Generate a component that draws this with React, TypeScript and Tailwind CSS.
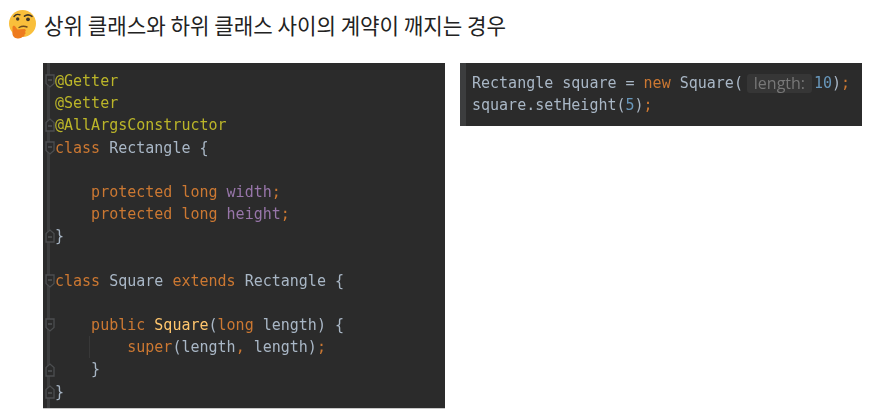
type Tok = [string, string];
type Fold = "start" | "end" | null;

const TXT = "text-[#a9b7c6]";
const KW = "text-[#cc7832]";
const ANN = "text-[#bbb529]";
const FIELD = "text-[#9876aa]";
const FN = "text-[#ffc66d]";
const NUM = "text-[#6897bb]";

const lines: { fold: Fold; toks: Tok[] }[] = [
  { fold: "start", toks: [["@Getter", ANN]] },
  { fold: null, toks: [["@Setter", ANN]] },
  { fold: "end", toks: [["@AllArgsConstructor", ANN]] },
  { fold: "start", toks: [["class ", KW], ["Rectangle {", TXT]] },
  { fold: null, toks: [] },
  { fold: null, toks: [["    protected long ", KW], ["width", FIELD], [";", KW]] },
  { fold: null, toks: [["    protected long ", KW], ["height", FIELD], [";", KW]] },
  { fold: "end", toks: [["}", TXT]] },
  { fold: null, toks: [] },
  { fold: "start", toks: [["class ", KW], ["Square ", TXT], ["extends ", KW], ["Rectangle {", TXT]] },
  { fold: null, toks: [] },
  { fold: "start", toks: [["    public ", KW], ["Square", FN], ["(", TXT], ["long ", KW], ["length) {", TXT]] },
  { fold: null, toks: [["        super", KW], ["(length", TXT], [", ", KW], ["length)", TXT], [";", KW]] },
  { fold: "end", toks: [["    }", TXT]] },
  { fold: "end", toks: [["}", TXT]] },
];

function FoldMark({ type }: { type: Fold }) {
  if (!type) return null;
  const d = type === "start" ? "M1 1H9V9.5L5 13L1 9.5Z" : "M1 13H9V4.5L5 1L1 4.5Z";
  return (
    <svg width="10" height="14" viewBox="0 0 10 14" fill="none" className="block shrink-0">
      <path d={d} fill="#2b2b2b" stroke="#4c4e50" strokeWidth="1.3" />
      <path d={type === "start" ? "M3 6H7" : "M3 8H7"} stroke="#5c5f62" strokeWidth="1.2" />
    </svg>
  );
}

function ThinkingFace() {
  return (
    <svg width="28" height="29" viewBox="0 0 28 29" className="shrink-0">
      <circle cx="14.5" cy="13.5" r="13.5" fill="#f9bf3b" />
      <path d="M6 6.5C7.5 4.5 10 4 12 4.8" fill="none" stroke="#3f3527" strokeWidth="1.4" strokeLinecap="round" />
      <path d="M16.5 6.2C18.5 4.6 21.5 4.6 24 6.4" fill="none" stroke="#3f3527" strokeWidth="1.6" strokeLinecap="round" />
      <circle cx="9.7" cy="9" r="1.7" fill="#3f3527" />
      <circle cx="20" cy="9.3" r="1.9" fill="#3f3527" />
      <path d="M11 17.5C13.5 16.2 16.5 16 19 17" fill="none" stroke="#6b4b1f" strokeWidth="1.4" strokeLinecap="round" />
      <path
        d="M4.5 17C5 15 7 15.5 8 17.5L9.5 19.5L16 19C18 19 18.5 21.2 16.8 21.8C18 22.5 17.8 24.2 16.5 24.5C16.8 25.8 15.8 26.8 14.5 26.8C13.5 28.3 11 28.8 8.5 28.3C5.5 27.6 4 25 4.5 21.5Z"
        fill="#ee7b1e"
      />
    </svg>
  );
}

export default function App() {
  return (
    <div className="w-[891px] h-[414px] bg-white overflow-hidden font-['Noto_Sans_CJK_KR',sans-serif]">
      <div className="flex items-start gap-[8px] pl-[8px] pt-[10px] h-[63px]">
        <ThinkingFace />
        <h1 className="text-[21.2px] leading-[30px] text-[#222] font-normal">
          상위 클래스와 하위 클래스 사이의 계약이 깨지는 경우
        </h1>
      </div>

      <div className="flex items-start gap-[15px] pl-[43px] font-['DejaVu_Sans_Mono',monospace] text-[15px] leading-[22.2px] blur-[0.35px]">
        <div className="w-[402px] h-[346px] bg-[#2b2b2b] border-b border-[#c8c8c8] flex">
          <div className="w-[7px] h-full border-r-[3px] border-[#3c3d3e] pt-[7px] shrink-0">
            {lines.map((l, i) => (
              <div key={i} className="h-[22.2px] flex items-center pl-[2px]">
                <FoldMark type={l.fold} />
              </div>
            ))}
          </div>
          <div className="pl-[5px] pt-[7px] whitespace-pre">
            {lines.map((l, i) => (
              <div key={i} className="relative h-[22.2px]">
                {i === 12 && <span className="absolute left-[34px] top-0 w-px h-full bg-[#383838]" />}
                {l.toks.map(([t, c], j) => (
                  <span key={j} className={c}>
                    {t}
                  </span>
                ))}
              </div>
            ))}
          </div>
        </div>

        <div className="w-[402px] h-[63px] bg-[#2b2b2b] flex">
          <div className="w-[6px] h-full bg-[#3c3d3e] shrink-0" />
          <div className="pl-[6px] pt-[9px] whitespace-pre">
            <div className="h-[22.2px] flex items-center">
              <span className={TXT}>Rectangle square = </span>
              <span className={KW}>new </span>
              <span className={TXT}>Square(</span>
              <span className="ml-[4px] mr-[2px] w-[65px] text-center h-[19px] leading-[19px] rounded-[3px] bg-[#363636] text-[#787878] text-[16px] font-['Open_Sans',sans-serif]">
                length:
              </span>
              <span className={NUM}>10</span>
              <span className={TXT}>)</span>
              <span className={KW}>;</span>
            </div>
            <div className="h-[22.2px]">
              <span className={TXT}>square.setHeight(</span>
              <span className={NUM}>5</span>
              <span className={TXT}>)</span>
              <span className={KW}>;</span>
            </div>
          </div>
        </div>
      </div>
    </div>
  );
}
